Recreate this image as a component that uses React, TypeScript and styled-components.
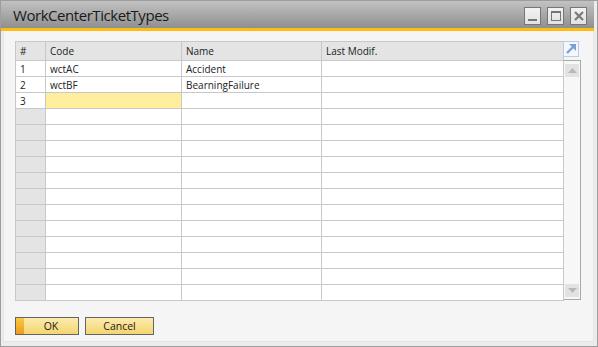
import React from 'react'
import styled, { createGlobalStyle } from 'styled-components'

const GlobalStyle = createGlobalStyle`
  html, body {
    margin: 0;
    padding: 0;
    background: #ffffff;
  }
  * {
    box-sizing: border-box;
  }
`

const Window = styled.div`
  width: 598px;
  height: 347px;
  border: 1px solid #9d9d9d;
  background: #ececec;
  display: flex;
  flex-direction: column;
  font-family: 'Open Sans', 'Noto Sans', sans-serif;
  color: #222;
`

const TitleBar = styled.div`
  height: 27px;
  margin-right: 3px;
  background: linear-gradient(#c2c2c2, #8f8f8f);
  display: flex;
  align-items: center;
  padding: 0 7px 0 12px;
`

const Title = styled.div`
  flex: 1;
  font-size: 15px;
  color: #1a1a1a;
  letter-spacing: -0.45px;
  padding-top: 1px;
`

const Controls = styled.div`
  display: flex;
  gap: 6px;
  margin-top: 2px;
`

const ControlButton = styled.div`
  width: 17px;
  height: 18px;
  border: 1px solid #767676;
  background: linear-gradient(#f2f2f2, #e2e2e2);
  display: flex;
  align-items: center;
  justify-content: center;
`

const Stripe = styled.div`
  height: 3px;
  margin-right: 3px;
  background: #fdbd10;
`

const Content = styled.div`
  flex: 1;
  margin: 0 3px 4px 2px;
  background: #f5f5f5;
  border: 1px solid #e6e6e6;
  border-top: none;
  padding: 10px 0 0 11px;
  display: flex;
  flex-direction: column;
`

const GridArea = styled.div`
  display: flex;
  align-items: flex-start;
`

const Table = styled.div`
  width: 549px;
  border-left: 1px solid #c8c8c8;
  border-top: 1px solid #c8c8c8;
  font-size: 10px;
`

const Row = styled.div<{ $header?: boolean }>`
  display: flex;
  height: ${({ $header }) => ($header ? '19px' : '16px')};
  background: ${({ $header }) => ($header ? '#e4e4e4' : '#ffffff')};
`

const Cell = styled.div<{ $w: number; $bg?: string }>`
  width: ${({ $w }) => $w}px;
  border-right: 1px solid #c8c8c8;
  border-bottom: 1px solid #c8c8c8;
  background: ${({ $bg }) => $bg || 'transparent'};
  padding-left: 4px;
  display: flex;
  align-items: center;
  white-space: nowrap;
  overflow: hidden;
  color: #222;
`

const SideColumn = styled.div`
  display: flex;
  flex-direction: column;
`

const ExpandIcon = styled.div`
  width: 16px;
  height: 16px;
  margin-left: -1px;
  margin-bottom: 3px;
  border: 1px solid #b9cde6;
  background: #f4f7fb;
  display: flex;
  align-items: center;
  justify-content: center;
`

const ScrollBar = styled.div`
  width: 17px;
  height: 240px;
  border: 1px solid #a9a9a9;
  border-left: none;
  background: #f7f7f7;
  display: flex;
  flex-direction: column;
  justify-content: space-between;
  padding: 3px 1px 2px 1px;
`

const ScrollArrow = styled.div`
  height: 13px;
  background: #e2e2e2;
  display: flex;
  align-items: center;
  justify-content: center;
`

const ButtonRow = styled.div`
  display: flex;
  gap: 6px;
  margin-top: 16px;
`

const Button = styled.div<{ $w: number; $primary?: boolean }>`
  width: ${({ $w }) => $w}px;
  height: 18px;
  border: 1px solid #646464;
  background: linear-gradient(#fcebb0, #f4d56e);
  display: flex;
  align-items: center;
  font-size: 10.5px;
  color: #1a1a1a;
  position: relative;
  padding-left: ${({ $primary }) => ($primary ? '8px' : '0')};

  &::before {
    content: '';
    display: ${({ $primary }) => ($primary ? 'block' : 'none')};
    position: absolute;
    left: 0;
    top: 0;
    bottom: 0;
    width: 8px;
    background: linear-gradient(#f9c93e, #f29a1c);
  }
`

const ButtonLabel = styled.span`
  flex: 1;
  text-align: center;
`

const cols = [30, 136, 140, 242]

const data: [string, string, string, string][] = [
  ['1', 'wctAC', 'Accident', ''],
  ['2', 'wctBF', 'BearningFailure', ''],
  ['3', '', '', ''],
]

const App: React.FC = () => {
  const rows = Array.from({ length: 15 }, (_, i) => data[i] || ['', '', '', ''])

  return (
    <>
      <GlobalStyle />
      <Window>
        <TitleBar>
          <Title>WorkCenterTicketTypes</Title>
          <Controls>
            <ControlButton>
              <svg width="12" height="12" viewBox="0 0 12 12">
                <rect x="1" y="9" width="9" height="2" fill="#767676" />
              </svg>
            </ControlButton>
            <ControlButton>
              <svg width="12" height="12" viewBox="0 0 12 12">
                <rect x="1.5" y="1.5" width="9" height="9" fill="none" stroke="#767676" />
                <rect x="1" y="1" width="10" height="2" fill="#767676" />
              </svg>
            </ControlButton>
            <ControlButton>
              <svg width="12" height="12" viewBox="0 0 12 12">
                <path d="M2 2 L10 10 M10 2 L2 10" stroke="#7a7a7a" strokeWidth="2.2" />
              </svg>
            </ControlButton>
          </Controls>
        </TitleBar>
        <Stripe />
        <Content>
          <GridArea>
            <Table>
              <Row $header>
                <Cell $w={cols[0]}>#</Cell>
                <Cell $w={cols[1]}>Code</Cell>
                <Cell $w={cols[2]}>Name</Cell>
                <Cell $w={cols[3]}>Last Modif.</Cell>
              </Row>
              {rows.map((r, i) => (
                <Row key={i}>
                  <Cell $w={cols[0]} $bg={i < 3 ? '#ffffff' : '#e4e4e4'}>{r[0]}</Cell>
                  <Cell $w={cols[1]} $bg={i === 2 ? '#ffee9e' : undefined}>{r[1]}</Cell>
                  <Cell $w={cols[2]}>{r[2]}</Cell>
                  <Cell $w={cols[3]}>{r[3]}</Cell>
                </Row>
              ))}
            </Table>
            <SideColumn>
              <ExpandIcon>
                <svg width="12" height="12" viewBox="0 0 12 12">
                  <path d="M4 1 H11 V8 Z" fill="#7f9fd2" />
                  <path d="M2 10 L8 4" stroke="#7f9fd2" strokeWidth="2.4" />
                </svg>
              </ExpandIcon>
              <ScrollBar>
                <ScrollArrow>
                  <svg width="9" height="5" viewBox="0 0 9 5">
                    <path d="M0 5 L4.5 0 L9 5 Z" fill="#b8b8b8" />
                  </svg>
                </ScrollArrow>
                <ScrollArrow>
                  <svg width="9" height="5" viewBox="0 0 9 5">
                    <path d="M0 0 L4.5 5 L9 0 Z" fill="#b8b8b8" />
                  </svg>
                </ScrollArrow>
              </ScrollBar>
            </SideColumn>
          </GridArea>
          <ButtonRow>
            <Button $w={64} $primary>
              <ButtonLabel>OK</ButtonLabel>
            </Button>
            <Button $w={69}>
              <ButtonLabel>Cancel</ButtonLabel>
            </Button>
          </ButtonRow>
        </Content>
      </Window>
    </>
  )
}

export default App
